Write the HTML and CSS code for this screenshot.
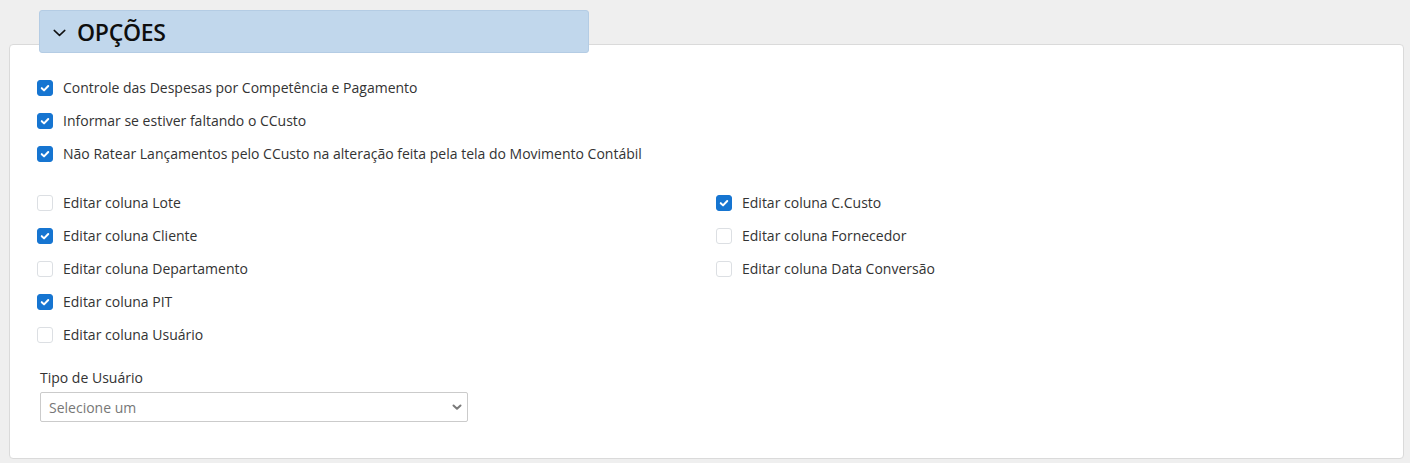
FILE: index.html
```html
<!DOCTYPE html>
<html lang="pt-BR">
<head>
<meta charset="utf-8">
<title>Opções</title>
<link rel="stylesheet" href="styles.css">
</head>
<body>
<div class="page">
  <div class="section-header">
    <svg class="chev" width="13" height="8" viewBox="0 0 13 8"><path d="M1.2 1.4 L6.5 6.4 L11.8 1.4" fill="none" stroke="#111" stroke-width="1.5" stroke-linecap="round" stroke-linejoin="round"/></svg>
    <span class="title">OPÇÕES</span>
  </div>
  <div class="card">
    <div class="group">
      <label class="check"><span class="box on"><svg viewBox="0 0 16 16"><path d="M4.3 8.2 L6.9 10.7 L11.7 5.7" fill="none" stroke="#fff" stroke-width="2.3" stroke-linecap="round" stroke-linejoin="round"/></svg></span>Controle das Despesas por Competência e Pagamento</label>
      <label class="check"><span class="box on"><svg viewBox="0 0 16 16"><path d="M4.3 8.2 L6.9 10.7 L11.7 5.7" fill="none" stroke="#fff" stroke-width="2.3" stroke-linecap="round" stroke-linejoin="round"/></svg></span>Informar se estiver faltando o CCusto</label>
      <label class="check"><span class="box on"><svg viewBox="0 0 16 16"><path d="M4.3 8.2 L6.9 10.7 L11.7 5.7" fill="none" stroke="#fff" stroke-width="2.3" stroke-linecap="round" stroke-linejoin="round"/></svg></span>Não Ratear Lançamentos pelo CCusto na alteração feita pela tela do Movimento Contábil</label>
    </div>
    <div class="cols">
      <div class="col">
        <label class="check"><span class="box"></span>Editar coluna Lote</label>
        <label class="check"><span class="box on"><svg viewBox="0 0 16 16"><path d="M4.3 8.2 L6.9 10.7 L11.7 5.7" fill="none" stroke="#fff" stroke-width="2.3" stroke-linecap="round" stroke-linejoin="round"/></svg></span>Editar coluna Cliente</label>
        <label class="check"><span class="box"></span>Editar coluna Departamento</label>
        <label class="check"><span class="box on"><svg viewBox="0 0 16 16"><path d="M4.3 8.2 L6.9 10.7 L11.7 5.7" fill="none" stroke="#fff" stroke-width="2.3" stroke-linecap="round" stroke-linejoin="round"/></svg></span>Editar coluna PIT</label>
        <label class="check"><span class="box"></span>Editar coluna Usuário</label>
      </div>
      <div class="col">
        <label class="check"><span class="box on"><svg viewBox="0 0 16 16"><path d="M4.3 8.2 L6.9 10.7 L11.7 5.7" fill="none" stroke="#fff" stroke-width="2.3" stroke-linecap="round" stroke-linejoin="round"/></svg></span>Editar coluna C.Custo</label>
        <label class="check"><span class="box"></span>Editar coluna Fornecedor</label>
        <label class="check"><span class="box"></span>Editar coluna Data Conversão</label>
      </div>
    </div>
    <div class="field">
      <div class="field-label">Tipo de Usuário</div>
      <div class="select">
        <span class="placeholder">Selecione um</span>
        <svg class="sel-chev" width="10" height="7" viewBox="0 0 10 7"><path d="M1.5 1.5 L5 4.8 L8.5 1.5" fill="none" stroke="#7a7a7a" stroke-width="2" stroke-linecap="round" stroke-linejoin="round"/></svg>
      </div>
    </div>
  </div>
</div>
</body>
</html>
```

FILE: styles.css
```css
* { box-sizing: border-box; }
html, body { margin: 0; padding: 0; background: #efefef; }
body {
  font-family: "Open Sans", "Liberation Sans", sans-serif;
  font-size: 14px;
  color: #333;
  width: 1410px;
  height: 463px;
  overflow: hidden;
}
.page {
  padding: 10px 6px 0 9px;
}
.section-header {
  position: relative;
  z-index: 2;
  margin-left: 30px;
  width: 550px;
  height: 43px;
  background: #c1d7ec;
  border: 1px solid #b4cce4;
  border-radius: 3px;
  display: flex;
  align-items: center;
  padding-left: 13px;
  margin-bottom: -9px;
}
.chev { margin-right: 11px; margin-top: 3px; }
.title {
  font-size: 23px;
  font-weight: 600;
  color: #0e0e0e;
  letter-spacing: -0.3px;
}
.card {
  position: relative;
  z-index: 1;
  background: #fff;
  border: 1px solid #dadada;
  border-radius: 4px;
  height: 415px;
  padding: 26px 27px 0 27px;
}
.group { display: flex; flex-direction: column; margin-bottom: 16px; }
.check {
  display: flex;
  align-items: center;
  height: 33px;
  cursor: pointer;
  white-space: nowrap;
}
.box {
  width: 16px;
  height: 16px;
  border: 1px solid #dcdfe3;
  border-radius: 3px;
  background: #fff;
  margin-right: 10px;
  flex: none;
  display: flex;
}
.box.on { background: #1675d1; border-color: #1675d1; }
.box svg { width: 14px; height: 14px; }
.cols {
  display: grid;
  grid-template-columns: 679px 1fr;
}
.col { display: flex; flex-direction: column; }
.field { margin-top: 16px; margin-left: 3px; }
.field-label { line-height: 21px; margin-bottom: 4px; }
.select {
  width: 428px;
  height: 30px;
  border: 1px solid #cbcbcb;
  border-radius: 2px;
  display: flex;
  align-items: center;
  justify-content: space-between;
  padding: 0 5px 0 8px;
}
.placeholder { color: #777; }
```
